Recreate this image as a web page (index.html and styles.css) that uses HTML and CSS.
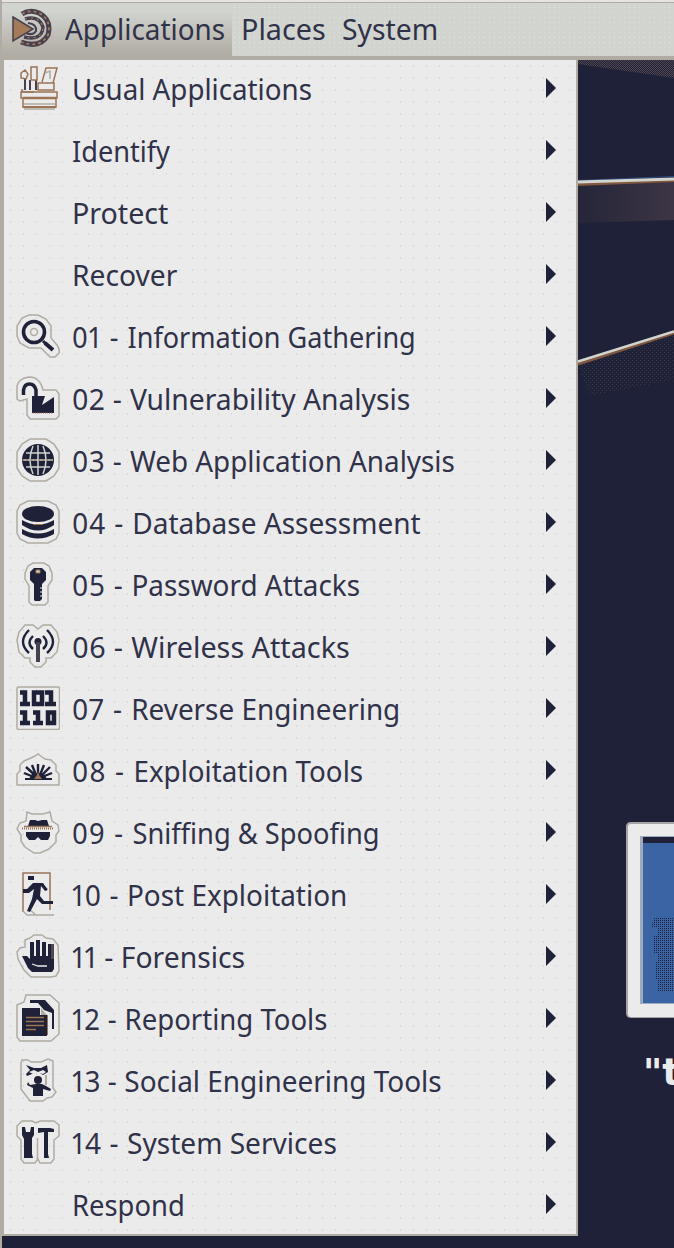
FILE: index.html
```html
<!DOCTYPE html>
<html lang="en">
<head>
<meta charset="utf-8">
<title>Applications</title>
<link rel="stylesheet" href="styles.css">
</head>
<body>
<div class="desktop">
  <svg class="wallpaper" width="674" height="1248" viewBox="0 0 674 1248">
    <defs>
      <pattern id="dots" width="2" height="2" patternUnits="userSpaceOnUse"><path d="M0 0h1v1H0zM1 1h1v1H1z" fill="#524650"/></pattern>
      <pattern id="sparse" width="4" height="4" patternUnits="userSpaceOnUse"><path d="M0 0h1v1H0zM2 2h1v1H2z" fill="#524650"/></pattern>
      <pattern id="ink" width="2" height="2" patternUnits="userSpaceOnUse"><path d="M0 0h1v1H0z" fill="#1f2138"/></pattern>
      <linearGradient id="fade" x1="0" x2="1"><stop offset="0" stop-color="#262539"/><stop offset="1" stop-color="#3c3545"/></linearGradient>
    </defs>
    <path d="M578 58h96v20L578 64z" fill="url(#dots)"/>
    <path d="M578 184l96-3v39l-96 3z" fill="url(#fade)"/>
    <path d="M578 364l96-30v46l-84 16z" fill="url(#sparse)" opacity=".55"/>
    <path d="M578 184.500l96-4" stroke="#80573f" stroke-width="3"/>
    <path d="M578 180.500l96-4" stroke="#2f4a80" stroke-width="1"/>
    <path d="M578 182l96-3" stroke="#d1d4cf" stroke-width="3"/>
    <path d="M578 363.500l96-31" stroke="#80573f" stroke-width="4"/>
    <path d="M578 361.500l96-30" stroke="#d1d4cf" stroke-width="2.500"/>
    <path d="M674 822h-43q-5 0-5 5v186q0 5 5 5h43z" fill="#a6a5a5"/>
    <path d="M674 824h-43q-3 0-3 3v187q0 3 3 3h43z" fill="#ebebeb"/>
    <path d="M640 836h34v168h-34z" fill="#9dabc0"/>
    <path d="M643 837h31v166h-31z" fill="#3b64a5"/>
    <path d="M643 837h31v6h-31z" fill="#1f2138"/>
    <path d="M654 917h20v75h-16v-12h-3v-18h3v-8h-4v-18h4v-8h-7z" fill="url(#ink)"/>
    <path d="M0 133h2v3H0zM0 265h1v12H0zM0 301h2v8H0zM0 430h2v2H0zM0 459h2v13H0zM0 560h1v8H0zM0 570h2v7H0zM0 588h2v14H0zM0 657h1v12H0zM0 786h2v13H0zM0 821h2v13H0zM0 955h1v10H0zM0 966h2v34H0z" fill="#80705f"/>
  </svg>
  <div class="caption">"t</div>

  <header class="panel">
    <div class="panel-item active">
      <svg width="44" height="44" viewBox="0 0 44 44" fill="none">
        <path d="M12 8Q20 3 29 7Q42 14 38 29Q30 43 11 36" stroke="#46404f" stroke-width="5"/>
        <path d="M12 8Q20 3 29 7Q42 14 38 29Q30 43 11 36" stroke="#a47b59" stroke-width="1.800" stroke-dasharray="3 3"/>
        <path d="M15 13Q29 9 33 21Q32 35 14 31" stroke="#46404f" stroke-width="3.500"/>
        <path d="M15 13Q29 9 33 21Q32 35 14 31" stroke="#a47b59" stroke-width="1.200" stroke-dasharray="2 4"/>
        <path d="M18 17Q27 18 26 25Q23 30 16 27" stroke="#46404f" stroke-width="2"/>
        <path d="M3 11L23 23L3 35Z" fill="#a47b59" stroke="#46404f" stroke-width="1.500"/>
      </svg>
      <span class="label">Applications</span>
    </div>
    <div class="panel-item places"><span class="label">Places</span></div>
    <div class="panel-item system"><span class="label">System</span></div>
  </header>

  <nav class="menu">
    <div class="row usual">
      <svg class="icon" viewBox="0 0 44 44" fill="none" stroke="#9b7455" stroke-width="1.500">
        <path d="M5 26h36v6H5zM7 32h33v9H7z" fill="#ebebeb"/><path d="M7 32h33" stroke-width="2.500"/><path d="M7 41h33" stroke-width="2"/><path d="M8 38h31M8 43h31" stroke="#b0aca4"/>
        <path d="M6 23v3h12"/><path d="M9 12v12M14 14v10M20 14v10" stroke="#46404f" stroke-width="2"/>
        <path d="M15 1h6v13h-6zM22 17h16v7H22zM26 16l4-14h11l-4 15M5 7l4-3 3 4-2 5-5-1z"/><path d="M29 7l5-2v8" stroke="#b0aca4"/>
      </svg>
      <span class="label">Usual Applications</span><i class="arrow"></i>
    </div>
    <div class="row identify"><span class="icon"></span><span class="label">Identify</span><i class="arrow"></i></div>
    <div class="row protect"><span class="icon"></span><span class="label">Protect</span><i class="arrow"></i></div>
    <div class="row recover"><span class="icon"></span><span class="label">Recover</span><i class="arrow"></i></div>
    <div class="row gathering">
      <svg class="icon" viewBox="0 0 44 44" fill="none">
        <path class="halo" d="M13 1h9l8 4 5 7v12l6 7q3 4 2 8l-4 4h-5l-9-9H13L4 29 1 22V12l5-8z"/>
        <circle cx="18" cy="18" r="10.500" stroke="#1f2138" stroke-width="3.600"/><circle class="halo" cx="18" cy="18" r="3.500"/>
        <path d="M27 27l3 3" stroke="#1f2138" stroke-width="3"/><path d="M29 29l8 7" stroke="#1f2138" stroke-width="4"/>
      </svg>
      <span class="label"><span class="num">01 - </span>Information Gathering</span><i class="arrow"></i>
    </div>
    <div class="row vulnerability">
      <svg class="icon" viewBox="0 0 44 44">
        <path class="halo" d="M1 23V10q2-8 12-9 11 0 14 13h13l3 4v22l-3 3H14l-3-4V23l-7 2z"/>
        <path d="M7.500 19v-5q1-6 6-6t6.500 6v7" fill="none" stroke="#1f2138" stroke-width="3.500"/>
        <path class="ink" d="M16 20h13l-3 9 12-8v16H16z"/><path d="M17 37h20" stroke="#9b7455" stroke-dasharray="1 1"/>
      </svg>
      <span class="label"><span class="num">02 - </span>Vulnerability Analysis</span><i class="arrow"></i>
    </div>
    <div class="row web">
      <svg class="icon" viewBox="0 0 44 44" fill="none">
        <path class="halo" d="M14 1h16l8 5 5 8v16l-5 8-8 5H14l-8-5-5-8V14l5-8z"/>
        <circle class="ink" cx="22" cy="22" r="16"/>
        <path d="M7 22h30M10 15h24M10 29h24M22 7v30M17 8q-6 14 0 28M27 8q6 14 0 28" stroke="#d1d4cf" stroke-width="1.500"/>
        <path d="M6 22h32M16 22v1M28 22v1" stroke="#9b7455" stroke-dasharray="2 2"/>
      </svg>
      <span class="label"><span class="num">03 - </span>Web Application Analysis</span><i class="arrow"></i>
    </div>
    <div class="row database">
      <svg class="icon" viewBox="0 0 44 44">
        <path class="halo" d="M12 1h20l8 4 3 6v22l-3 6-8 4H12l-8-4-3-6V11l3-6z"/>
        <ellipse class="ink" cx="22" cy="14" rx="16" ry="8"/>
        <path class="ink" d="M6 20q16 9 32 0v5q-16 11-32 0zM6 29q16 9 32 0v5q-16 9-32 0z"/>
        <path d="M17 24.500h10" stroke="#9b7455"/>
      </svg>
      <span class="label"><span class="num">04 - </span>Database Assessment</span><i class="arrow"></i>
    </div>
    <div class="row password">
      <svg class="icon" viewBox="0 0 44 44">
        <path class="halo" d="M17 1h11l5 3 3 7v7l-4 6v16l-3 3H16l-3-3V24l-4-7v-6l3-7z"/>
        <path class="ink" d="M18 6h8l4 4v8l-4 4v15l-2 2h-5l-1-1V22l-4-4v-8z"/><path d="M20 8h4v3h-4z" fill="#d1d4cf" stroke="#9b7455"/>
        <path d="M24 26h2M24 30h2M24 34h2" stroke="#ebebeb"/>
      </svg>
      <span class="label"><span class="num">05 - </span>Password Attacks</span><i class="arrow"></i>
    </div>
    <div class="row wireless">
      <svg class="icon" viewBox="0 0 44 44" fill="none">
        <path class="halo" d="M9 1h8l5 4 5-4h8l6 7 2 8-2 12-6 6h-5v4l-5 5h-6l-5-5v-4H9l-6-6-2-12 2-8z"/>
        <path d="M13 6q-12 12 0 23M17 12q-7 7 0 13M31 6q12 12 0 23M27 12q7 7 0 13" stroke="#1f2138" stroke-width="2.400"/>
        <circle class="ink" cx="22" cy="17.500" r="3.500"/><path d="M22 18v20" stroke="#46404f" stroke-width="4"/>
      </svg>
      <span class="label"><span class="num">06 - </span>Wireless Attacks</span><i class="arrow"></i>
    </div>
    <div class="row reverse">
      <svg class="icon" viewBox="0 0 44 44" fill="none">
        <rect class="halo" x="1" y="1" width="42.500" height="42.500" rx="1.500"/>
        <path d="M4 6.500h5v12M4 18h10M18 6.500h8v11.500h-8zM29 6.500h6v12M29 18h11M4 26.500h5v12M4 37h10M17 26.500h5v12M17 37h10M32 26.500h6v10.500h-6z" stroke="#1f2138" stroke-width="4.500"/>
      </svg>
      <span class="label"><span class="num">07 - </span>Reverse Engineering</span><i class="arrow"></i>
    </div>
    <div class="row exploitation">
      <svg class="icon" viewBox="0 0 44 44">
        <path class="halo" d="M15 10l4-2 3-2 4 3 3 2 6 1 5 5v6l3 3v11H1V26l3-3v-6l4-4z"/>
        <path d="M9 31h27" stroke="#1f2138" stroke-width="2"/>
        <path d="M10 19l10 9M34 19l-9 9M8 25l10 4M36 25l-10 4M16 17l4 10M28 17l-4 10M22 16v12" stroke="#1f2138" stroke-width="2.400"/>
        <path class="ink" d="M13 31l3-5h12l3 5z"/>
        <path d="M18 31l3-4 1-4 1 4 3 4z" fill="#9b7455"/>
      </svg>
      <span class="label"><span class="num">08 - </span>Exploitation Tools</span><i class="arrow"></i>
    </div>
    <div class="row sniffing">
      <svg class="icon" viewBox="0 0 44 44">
        <path class="halo" d="M11 2l5 2h11l7-2 2 9 6 4 1 6-3 4v7l-7 7-9 4h-6l-9-6-4-6v-6l-4-6 3-6 6-2z"/>
        <path class="ink" d="M14 10h5l3 1 4-1h5l2 6H12zM10 22h24v4l-2 4h-7l-3-3-3 3h-6l-3-4z"/>
        <path d="M6 18.500h32" stroke="#9b7455" stroke-width="2" stroke-dasharray="1 1"/><path d="M8 16.500h28" stroke="#9b7455" stroke-width="1.500"/>
      </svg>
      <span class="label"><span class="num">09 - </span>Sniffing &amp; Spoofing</span><i class="arrow"></i>
    </div>
    <div class="row post">
      <svg class="icon" viewBox="0 0 44 44" fill="none">
        <path d="M7 40V1h27v37" stroke="#9b7455" stroke-width="1.500"/><path d="M7 39l4 4h27M13 37l7 6" stroke="#b0aca4" stroke-width="1.500"/>
        <path class="ink" d="M12 4h6v4h-6zM7 17h4l6-6h10l4 7-2 1-4-5-1 10 4 5h9v3H26l-5-5-7 13-3-1 5-12 2-10-5 4H7z"/>
        <path d="M26 12l5 6" stroke="#1f2138" stroke-width="2"/>
      </svg>
      <span class="label"><span class="num">10 - </span>Post Exploitation</span><i class="arrow"></i>
    </div>
    <div class="row forensics">
      <svg class="icon" viewBox="0 0 44 44">
        <path class="halo" d="M9 6l5-2 4-3h8l4 3 7 1 5 6 1 26-3 5-5 1H15l-7-7-6-11-1-7 3-4 5-1z"/>
        <path class="ink" d="M14 8h4v14h2V6h4v16h2V8h4v14h2V10h6v25l-2 3H16l-4-4-6-12h5l3 3z"/>
        <path d="M35 10h3v15h-3z" fill="#524650"/><path d="M16 30l6 2h9" stroke="#ebebeb" fill="none" stroke-width="1.300"/>
      </svg>
      <span class="label"><span class="num">11 - </span>Forensics</span><i class="arrow"></i>
    </div>
    <div class="row reporting">
      <svg class="icon doc" viewBox="0 0 44 48">
        <path class="halo" d="M10 1h24l9 8v31l-8 7H4l-3-4V11l7-3z"/>
        <path class="ink" d="M14 6h15l9 10v19h-2V19l-8-3-6-7h-8zM6 14h18v7h7v21H6z"/>
        <path d="M25 14l6 7h-6" fill="#b0aca4"/>
        <path d="M10 23.500h18M10 27.500h18M10 31.500h18M10 35.500h10" stroke="#9b7455" stroke-width="1.300"/><path d="M31.500 21v20" stroke="#9b7455"/>
      </svg>
      <span class="label"><span class="num">12 - </span>Reporting Tools</span><i class="arrow"></i>
    </div>
    <div class="row social">
      <svg class="icon" viewBox="0 0 44 44">
        <path class="halo" d="M6 2h6l3 2h10l7-3 5 2v27l3 4-4 5-5 1-4 3H14l-3-4-6-8V5z"/>
        <path class="ink" d="M10 7l8 3h7l6-3 1 7-5 3-5-3-6 2-5 2-1-2 4-4z"/><path d="M13 14l5-2 4 2 5-2 3 2-3 2-5-1-5 1z" fill="#ebebeb"/>
        <circle class="ink" cx="22" cy="22" r="4"/><path class="ink" d="M12 24l2 3 6-1h6l4 2 5 3-1 2-7-2v7H17v-8l-6-3z"/><path d="M30 17v10" stroke="#b0aca4" stroke-width="2"/>
      </svg>
      <span class="label"><span class="num">13 - </span>Social Engineering Tools</span><i class="arrow"></i>
    </div>
    <div class="row services">
      <svg class="icon" viewBox="0 0 44 44">
        <path class="halo" d="M6 1h10l4 2 4-2h14l5 4v11l-5 4v19l-3 4H24l-2-4-3 4H8l-3-4V20l-4-4V6z"/><path class="halo" d="M21.500 18v21"/>
        <path class="ink" d="M6 7h3l1 5h4l1-5h3v8l-2 3v16l1 4H8V19l-2-4zM22 8h12l4 1v3h-6v22l1 4h-5V12l-6 1z"/>
      </svg>
      <span class="label"><span class="num">14 - </span>System Services</span><i class="arrow"></i>
    </div>
    <div class="row respond"><span class="icon"></span><span class="label">Respond</span><i class="arrow"></i></div>
  </nav>
</div>
</body>
</html>
```
FILE: styles.css
```css
* { box-sizing: border-box; }
body { margin: 0; }
.desktop {
  position: relative;
  width: 674px;
  height: 1248px;
  overflow: hidden;
  background: #1f2138;
  border-left: 2px solid #b0aca4;
  font-family: "Noto Sans", sans-serif;
  font-size: 29.5px;
  font-variant-numeric: proportional-nums;
  color: #303249;
}
.wallpaper { position: absolute; left: -2px; top: 0; overflow: visible; }
.caption {
  position: absolute;
  left: 641px;
  top: 1046px;
  font-family: "DejaVu Sans", sans-serif;
  font-weight: bold;
  font-size: 37px;
  line-height: 54px;
  color: #ebebeb;
}
.panel {
  position: relative;
  display: flex;
  height: 60px;
  padding-top: 3px;
  background:
    linear-gradient(#e4e5e2 0 2px, #b0aca4 2px 3px, transparent 3px),
    radial-gradient(circle, #dfe1dd 0 .7px, transparent .8px) 0 0 / 5px 5px #d1d4cf;
  border-bottom: 4px solid #b0aca4;
}
.panel-item { display: flex; align-items: center; height: 53px; }
.panel-item .label { margin-top: -2px; }
.panel-item.active {
  width: 230px;
  padding: 0 0 0 8px;
  gap: 10px;
  background: linear-gradient(#d1d4cf 15%, #b5b2aa 85%, #b0aca4);
  --sx: .944;
}
.panel-item.active svg { margin-top: -3px; flex: none; }
.panel-item.active .label { margin-left: 1px; }
.places { padding-left: 9px; width: 101px; --sx: .974; }
.system { padding-left: 9px; --sx: .96; }
.menu {
  position: relative;
  display: flow-root;
  width: 576px;
  height: 1176px;
  border: solid #b0aca4;
  border-width: 0 2px 2px;
  background: radial-gradient(circle, #d9d9d9 0 .6px, transparent .7px) 0 0 / 13px 12px #ebebeb;
}
.row {
  display: flex;
  align-items: center;
  height: 62px;
  padding: 0 20px 0 12px;
}
.row:first-child { margin-top: -3px; }
.row .label { margin-top: 2px; }
.icon { width: 44px; height: 44px; flex: none; margin-right: 12px; }
.icon.doc { height: 48px; }
.label {
  white-space: nowrap;
  line-height: 40px;
  transform-origin: 0 50%;
  transform: scaleX(var(--sx, .92));
}
.num { letter-spacing: var(--ls, 0); }
.usual { --sx: .94; }
.protect { --sx: .97; }
.recover { --sx: .956; }
.gathering { --sx: .917; --ls: 1.1px; }
.vulnerability { --sx: .958; --ls: .4px; }
.web { --sx: .943; --ls: .5px; }
.database { --sx: .95; --ls: .9px; }
.password { --sx: .945; --ls: .8px; }
.wireless { --sx: .974; --ls: .4px; }
.reverse { --sx: .945; --ls: 1.1px; }
.exploitation { --sx: .94; --ls: 1.2px; }
.sniffing { --sx: .924; --ls: 1.3px; }
.post { --sx: .946; --ls: .6px; }
.forensics { --sx: .959; }
.reporting { --sx: .934; --ls: .4px; }
.social { --sx: .947; --ls: .1px; }
.services { --sx: .952; --ls: .6px; }
.respond { --sx: .928; }
.arrow {
  width: 10px;
  height: 20px;
  margin-left: auto;
  background: #1f2138;
  clip-path: polygon(0 0, 100% 50%, 0 100%);
}
.halo { fill: none; stroke: #b0aca4; stroke-width: 1.5; }
.ink { fill: #1f2138; }
```
